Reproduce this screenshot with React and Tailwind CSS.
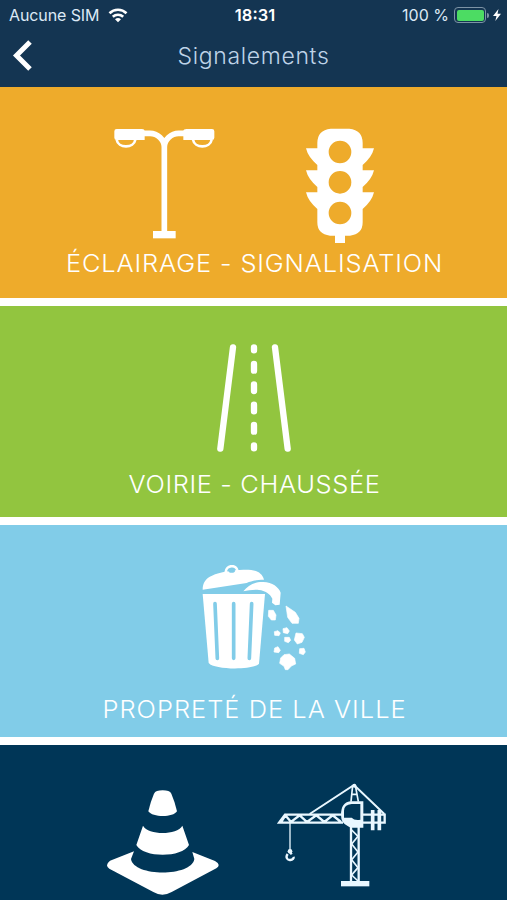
import { useState } from "react";

const LampIcon = () => (
    <svg className="w-[101px] h-[111px]" viewBox="42 39 303 333" fill="none" stroke="#fff">
        <path d="M193 352V96C193 74 172 55 150 55H130M193 96C193 74 214 55 236 55H256" strokeWidth="17" />
        <path d="M50 42H126Q134 42 134 48V75H50Q43 75 43 68V49Q43 42 50 42ZM336 42H260Q250 42 250 48V75H336Q343 75 343 68V49Q343 42 336 42Z" fill="#fff" stroke="none" />
        <path d="M50 74C54 101 102 101 106 74M279 74C283 101 331 101 335 74" strokeWidth="8" />
        <path d="M159 348H227V370H159Z" fill="#fff" stroke="none" />
    </svg>
);

const TrafficLightIcon = () => (
    <svg className="w-[68px] h-[115px]" viewBox="48 39 204 345" fill="#fff">
        <path
            fillRule="evenodd"
            d="M122 41H178Q218 45 218 84V100H252Q246 126 218 150V166H252Q246 192 218 216V232H252Q246 258 218 282V322Q218 358 180 362H165V384H135V362H120Q82 358 82 322V282Q54 258 48 232H82V216Q54 192 48 166H82V150Q54 126 48 100H82V84Q82 45 122 41ZM150 77a34 34 0 1 0 0 68a34 34 0 1 0 0-68ZM150 168a34 34 0 1 0 0 68a34 34 0 1 0 0-68ZM150 260a34 34 0 1 0 0 68a34 34 0 1 0 0-68Z"
        />
    </svg>
);

const RoadIcon = () => (
    <svg className="w-[76px] h-[110px]" viewBox="48 24 228 330" fill="none" stroke="#fff" strokeLinecap="round" strokeWidth="19">
        <path d="M99 37L61 341M225 37L263 341M162 37V46M162 87V107M162 148V168M162 209V229M162 270V290M162 331V340" />
    </svg>
);

const TrashIcon = () => (
    <svg className="w-[104px] h-[106px]" viewBox="36 30 312 318" fill="#fff">
        <path d="M38 104C38 83 47 70 66 62C90 50 128 45 160 44C195 43 215 50 222 74C200 74 185 78 170 84L38 104Z" />
        <path d="M107 52C108 29 140 27 143 49" fill="none" stroke="#fff" strokeWidth="8" />
        <ellipse cx="125" cy="47" rx="10" ry="6" fill="#81cce8" />
        <path d="M160 109C174 91 195 80 220 81C247 82 266 96 272 113L269 149L256 151L246 143L247 131C240 116 225 107 207 105C190 103 174 107 160 109Z" />
        <path d="M38 117H225L207 326C190 346 72 345 56 324Z" />
        <path d="M75 146L82 310M131 146V310M185 146L178 310" fill="none" stroke="#81cce8" strokeWidth="11" strokeLinecap="round" />
        <path d="M236 166L250 166L258 180L256 195H244L235 184ZM288 153L316 172L327 190L325 205L306 205L293 187ZM253 230L264 227L271 234L267 242L254 241ZM279 221L291 218L298 228L293 236L280 233ZM284 247L298 247L302 256L295 263L284 259ZM318 234L337 236L343 247L336 262L322 267L313 255ZM254 279L264 275L271 286L266 293L252 291ZM329 281L342 280L346 291L340 299L328 295ZM282 299L298 297L314 310L317 327L304 333L294 344H286L282 334L269 325L272 309Z" stroke="#fff" strokeWidth="2" strokeLinejoin="round" />
    </svg>
);

const ConeIcon = () => (
    <svg className="w-[113px] h-[106px]" viewBox="18 30 339 318" fill="#fff">
        <path d="M162 41Q167 31 188 31Q209 31 214 41Q225 66 231 94C220 113 157 113 145 94Q151 66 162 41Z" />
        <path d="M129 137C145 166 231 166 247 137L267 195C246 234 130 234 109 195Z" />
        <path d="M102 214L93 237C101 291 275 291 283 237L277 216L345 243Q365 254 349 265L215 336Q187 352 160 336L28 266Q13 256 30 242Z" />
    </svg>
);

const CraneIcon = () => (
    <svg className="w-[109px] h-[104px] -mt-[7px]" viewBox="36 24 327 312" fill="none" stroke="#e9f7ff" strokeWidth="7">
        <path d="M230 119H60L42 143H234M48 142L61 121L78 141L104 121L126 141L154 121L178 141L203 121L228 141M294 119H359V143H294" />
        <path d="M134 117L267 30L358 117" strokeWidth="6" />
        <path d="M263 31L258 80M271 31L280 80M260 58H278" strokeWidth="5" />
        <circle cx="268" cy="32" r="6" fill="#e9f7ff" stroke="none" />
        <path d="M323 105V166M343 105V166" strokeWidth="11" />
        <path fillRule="evenodd" fill="#e9f7ff" stroke="none" d="M256 79H295V158H258Q253 156 248 153Q228 144 228 120Q228 82 256 79ZM260 87Q237 89 237 107V128H260Q268 137 286 134V87Z" />
        <path d="M258 155V320M281 155V320" />
        <path d="M260 165L279 184L260 207L279 231L260 254L279 278L260 300L279 318" strokeWidth="5" />
        <path d="M228 318H313V334H228Z" fill="#e9f7ff" stroke="none" />
        <path d="M75 144V226" strokeWidth="4" />
        <circle cx="75" cy="229" r="7" fill="#e9f7ff" stroke="none" />
        <path d="M76 232L80 238M68 237C60 248 68 256 76 255C83 254 87 250 86 245" strokeWidth="7" />
    </svg>
);

const categories = [
    {
        id: "eclairage",
        label: "ÉCLAIRAGE - SIGNALISATION",
        icons: [LampIcon, TrafficLightIcon],
        box: "h-[211px] bg-[#eeab2b]",
        row: "pt-[41px] h-[161px] pl-[114px] gap-[91px]",
        text: "tracking-[0.8px]",
    },
    {
        id: "voirie",
        label: "VOIRIE - CHAUSSÉE",
        icons: [RoadIcon],
        box: "h-[211px] bg-[#92c53f]",
        row: "pt-[37px] h-[163px] pl-[216px]",
        text: "tracking-[0.6px]",
    },
    {
        id: "proprete",
        label: "PROPRETÉ DE LA VILLE",
        icons: [TrashIcon],
        box: "h-[212px] bg-[#81cce8]",
        row: "pt-[40px] h-[169px] pl-[202px]",
        text: "tracking-[0.95px]",
    },
    {
        id: "travaux",
        label: "",
        icons: [ConeIcon, CraneIcon],
        box: "h-[155px] bg-[#003657]",
        row: "pt-[45px] h-[155px] pl-[106px] gap-[58px]",
        text: "",
    },
];

const StatusBar = () => (
    <div className="grid grid-cols-3 items-center h-[30px] pl-[9px] pr-[6px] text-[16.5px] text-[#dce9f5]">
        <div className="flex items-center gap-[9px] whitespace-nowrap">
            <span className="text-[16px] tracking-[-0.1px]">Aucune SIM</span>
            <svg className="w-[20px] h-[15px]" viewBox="0 0 20 15" fill="none" stroke="#fff" strokeWidth="2.6">
                <path d="M1.5 5.2C6.2 .6 13.8 .6 18.5 5.2M4.8 8.8C7.8 6 12.2 6 15.2 8.8" />
                <path d="M10 14.2L7 11.3Q10 8.8 13 11.3Z" fill="#fff" stroke="none" />
            </svg>
        </div>
        <span className="text-center font-semibold text-white">18:31</span>
        <div className="flex items-center justify-end whitespace-nowrap">
            <span className="mr-[5px] text-[16px]">100 %</span>
            <div className="w-[32px] h-[16px] p-[1.5px] rounded-[4px] border border-[#7d93a5]">
                <div className="h-full rounded-[2px] bg-[#4cdc63]"></div>
            </div>
            <div className="w-[2px] h-[5px] ml-[1px] rounded-r bg-[#7d93a5]"></div>
            <svg className="w-[8px] h-[12px] ml-[4px]" viewBox="0 0 8 12" fill="#fff">
                <path d="M5.5 0L0 7H3.5L2.3 12L8 4.8H4.5Z" />
            </svg>
        </div>
    </div>
);

const App = () => {
    const [selected, setSelected] = useState(null);

    return (
        <div className="h-[900px] overflow-hidden bg-white font-['Inter',sans-serif]">
            <header className="h-[87px] bg-[#143552]">
                <StatusBar />
                <div className="grid grid-cols-[40px_1fr_40px] items-center h-[53px]">
                    <button type="button" aria-label="Retour" className="pl-[12px] pb-[4px]">
                        <svg className="w-[21px] h-[32px]" viewBox="0 0 21 32" fill="none" stroke="#fff" strokeWidth="5">
                            <path d="M18 3L4.5 16.5L18 30" />
                        </svg>
                    </button>
                    <h1 className="text-center text-[23px] font-light tracking-[0.65px] text-[#bed3e8]">Signalements</h1>
                </div>
            </header>

            <main className="flex flex-col gap-[8px]">
                {categories.map((item) => (
                    <button
                        key={item.id}
                        type="button"
                        aria-pressed={selected === item.id}
                        onClick={() => setSelected(item.id)}
                        className={`flex flex-col justify-start w-full shrink-0 ${item.box}`}
                    >
                        <div className={`flex items-start w-full shrink-0 ${item.row}`}>
                            {item.icons.map((Icon, i) => (
                                <Icon key={i} />
                            ))}
                        </div>
                        {item.label && (
                            <div className={`w-full pl-[2px] text-center text-[24px] leading-8 font-light whitespace-nowrap scale-x-[1.06] text-white ${item.text}`}>
                                {item.label}
                            </div>
                        )}
                    </button>
                ))}
            </main>
        </div>
    );
};

export default App;
